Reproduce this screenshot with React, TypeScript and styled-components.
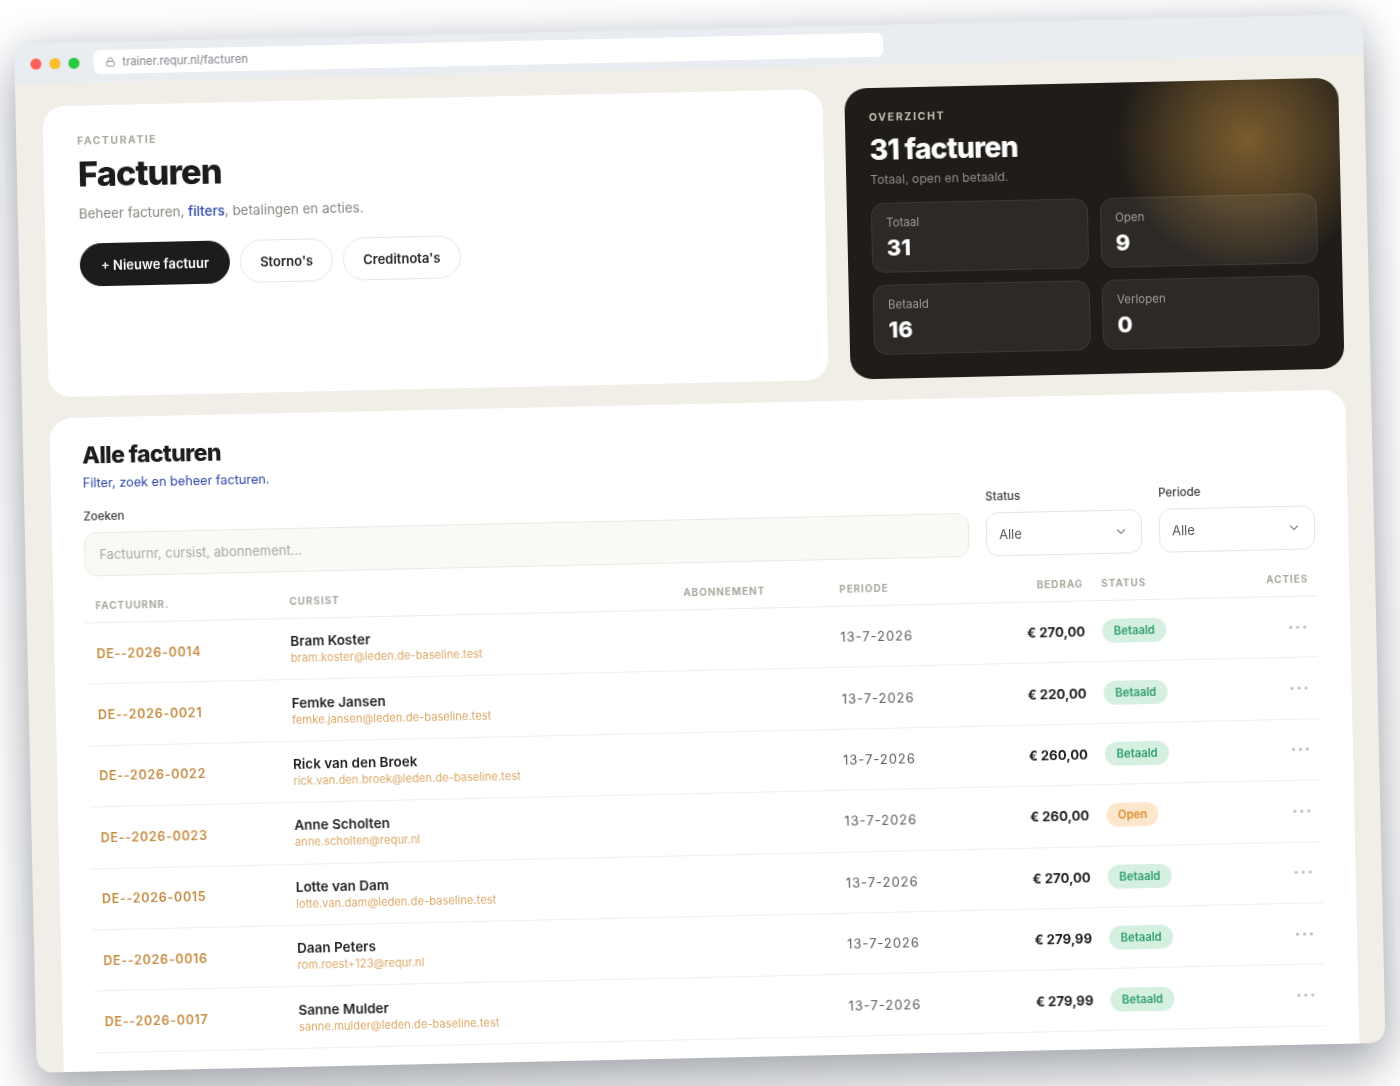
import React from "react";
import styled, {createGlobalStyle} from "styled-components";
import {ChevronDown, Lock} from "lucide-react";

const GlobalStyle = createGlobalStyle`
  html, body {
    margin: 0;
    height: 1086px;
    overflow: hidden;
    background: #ffffff;
    font-family: Inter, "Liberation Sans", sans-serif;
  }
  * {
    box-sizing: border-box;
  }
`;

const Browser = styled.div`
  width: 1349px;
  height: 1029px;
  margin: 44px 0 0 14px;
  display: flex;
  flex-direction: column;
  overflow: hidden;
  background: #f1eee8;
  border-radius: 16px;
  box-shadow: 0 30px 50px rgba(30, 36, 48, 0.3), 0 0 38px rgba(70, 85, 110, 0.24);
  transform-origin: 0 0;
  transform: rotate(-1.27deg);
  filter: blur(0.4px);
`;

const ChromeBar = styled.div`
  height: 40px;
  flex: none;
  display: flex;
  align-items: center;
  padding: 0 16px;
  background: #e9ecf1;
`;

const Light = styled.span<{$color: string}>`
  width: 11px;
  height: 11px;
  margin-right: 8px;
  border-radius: 50%;
  background: ${p => p.$color};
`;

const AddressBar = styled.div`
  width: 790px;
  height: 24px;
  margin-left: 6px;
  padding-left: 12px;
  display: flex;
  align-items: center;
  gap: 7px;
  border-radius: 7px;
  background: #ffffff;
  color: #7f8289;
  font-size: 11.25px;
`;

const Content = styled.div`
  flex: 1;
  min-height: 0;
  display: flex;
  flex-direction: column;
  gap: 21px;
  padding: 23px 26px 0 27px;
`;

const TopRow = styled.div`
  height: 291px;
  flex: none;
  display: grid;
  grid-template-columns: 780px 1fr;
  gap: 22px;
`;

const HeroCard = styled.section`
  padding: 29px 34px;
  background: #ffffff;
  border-radius: 22px;
`;

const Eyebrow = styled.div`
  font-size: 10.5px;
  line-height: 14px;
  font-weight: 700;
  letter-spacing: 0.14em;
  color: #a9a89e;
`;

const PageTitle = styled.h1`
  margin: 5px 0 0;
  font-size: 34.5px;
  line-height: 42px;
  font-weight: 800;
  letter-spacing: -0.03em;
  color: #1c1c1b;
`;

const HeroText = styled.p`
  margin: 8px 0 0;
  font-size: 13.4px;
  line-height: 20px;
  color: #85857f;

  b {
    font-weight: 500;
    color: #2a45a5;
  }
`;

const ButtonRow = styled.div`
  margin-top: 20px;
  display: flex;
  align-items: center;
  gap: 10px;
`;

const PillButton = styled.button<{$dark?: boolean}>`
  height: 43px;
  padding: 0 ${p => (p.$dark ? "20px" : "19px")};
  border-radius: 22px;
  border: 1px solid ${p => (p.$dark ? "#1c1c1b" : "#e8e6e1")};
  background: ${p => (p.$dark ? "#1c1c1b" : "#ffffff")};
  color: ${p => (p.$dark ? "#ffffff" : "#232322")};
  font-family: inherit;
  font-size: 13px;
  font-weight: 600;
`;

const OverviewCard = styled.section`
  padding: 23px 24px 24px;
  display: flex;
  flex-direction: column;
  border-radius: 22px;
  background:
    radial-gradient(
      circle 136px at 402px 60px,
      rgba(190, 140, 62, 0.57),
      rgba(190, 140, 62, 0.3) 50%,
      rgba(190, 140, 62, 0) 96%
    ),
    #201d19;
`;

const OverviewEyebrow = styled(Eyebrow)`
  color: #c4c0b6;
  letter-spacing: 0.16em;
`;

const OverviewTitle = styled.h2`
  margin: 6px 0 0;
  font-size: 28.5px;
  line-height: 38px;
  font-weight: 800;
  letter-spacing: -0.03em;
  color: #ffffff;
`;

const OverviewText = styled.p`
  margin: 2px 0 0;
  font-size: 12.2px;
  line-height: 18px;
  color: #8f8c85;
`;

const StatGrid = styled.div`
  margin-top: 14px;
  display: grid;
  grid-template-columns: 1fr 1fr;
  grid-auto-rows: 70px;
  gap: 12px;
`;

const StatCard = styled.div`
  padding: 12px 14px;
  border-radius: 14px;
  background: rgba(255, 255, 255, 0.055);
  border: 1px solid rgba(255, 255, 255, 0.07);
`;

const StatLabel = styled.div`
  font-size: 11.5px;
  line-height: 15px;
  color: #a09d96;
`;

const StatValue = styled.div`
  margin-top: 3px;
  font-size: 22px;
  line-height: 28px;
  font-weight: 800;
  color: #ffffff;
`;

const TableCard = styled.section`
  flex: 1;
  min-height: 0;
  padding: 23px 33px 0 32px;
  background: #ffffff;
  border-radius: 22px 22px 0 0;
`;

const CardTitle = styled.h2`
  margin: 0;
  font-size: 23.2px;
  line-height: 30px;
  font-weight: 800;
  letter-spacing: -0.03em;
  color: #1c1c1b;
`;

const CardText = styled.p`
  margin: 4px 0 0;
  font-size: 12.7px;
  line-height: 18px;
  color: #2a45a5;
`;

const Filters = styled.div`
  margin-top: 16px;
  display: grid;
  grid-template-columns: 1fr 156px 156px;
  gap: 17px;
`;

const Field = styled.div`
  display: flex;
  flex-direction: column;
  gap: 7.5px;
`;

const FieldLabel = styled.label`
  font-size: 11.5px;
  line-height: 16px;
  font-weight: 500;
  color: #3a3a38;
`;

const SearchInput = styled.input`
  height: 44px;
  padding: 0 14px;
  border: 1px solid #ebe9e2;
  border-radius: 12px;
  background: #faf9f5;
  font-family: inherit;
  font-size: 13px;
  outline: none;

  &::placeholder {
    color: #a8a8a2;
  }
`;

const SelectBox = styled.div`
  height: 44px;
  padding: 0 13px 0 12px;
  display: flex;
  align-items: center;
  justify-content: space-between;
  border: 1px solid #e6e4df;
  border-radius: 12px;
  background: #ffffff;
  font-size: 13px;
  color: #555553;

  svg {
    color: #85857f;
  }
`;

const COLUMNS = "194px 394px 156px 112px 150px 136px 1fr";

const HeadRow = styled.div`
  margin-top: 11.5px;
  height: 36px;
  display: grid;
  grid-template-columns: ${COLUMNS};
  align-items: center;
  border-bottom: 1px solid #ecebe6;
`;

const HeadCell = styled.div<{$right?: boolean}>`
  padding: 0 ${p => (p.$right ? "8px" : "10px")} 0 10px;
  text-align: ${p => (p.$right ? "right" : "left")};
  font-size: 10px;
  font-weight: 700;
  letter-spacing: 0.09em;
  color: #a9a89e;
`;

const Row = styled.div`
  height: 61.4px;
  display: grid;
  grid-template-columns: ${COLUMNS};
  align-items: center;
  border-bottom: 1px solid #f0efeb;
`;

const Cell = styled.div<{$right?: boolean}>`
  padding: 0 ${p => (p.$right ? "7px" : "10px")} 0 10px;
  text-align: ${p => (p.$right ? "right" : "left")};
`;

const InvoiceNo = styled(Cell)`
  font-size: 12.5px;
  font-weight: 600;
  letter-spacing: 0.057em;
  color: #c48a3f;
`;

const Name = styled.div`
  font-size: 13.5px;
  line-height: 18px;
  font-weight: 600;
  color: #1f1f1e;
`;

const Email = styled.div`
  font-size: 11.2px;
  line-height: 16px;
  color: #dba968;
`;

const DateCell = styled(Cell)`
  font-size: 13px;
  letter-spacing: 0.075em;
  color: #5c5c58;
`;

const Amount = styled(Cell)`
  font-size: 13.2px;
  font-weight: 700;
  color: #1f1f1e;
`;

const Badge = styled.span<{$open?: boolean}>`
  display: inline-flex;
  align-items: center;
  height: 24px;
  padding: 0 11.5px;
  border-radius: 12px;
  background: ${p => (p.$open ? "#fde7cc" : "#d5f0e1")};
  color: ${p => (p.$open ? "#d88d2f" : "#2f9e68")};
  font-size: 11.3px;
  font-weight: 600;
`;

const Dots = styled.div`
  padding-right: 11px;
  display: flex;
  justify-content: flex-end;
  gap: 4px;

  span {
    width: 3px;
    height: 3px;
    border-radius: 50%;
    background: #bcbcb8;
  }
`;

interface Invoice {
    number: string,
    name: string,
    email: string,
    amount: string,
    open?: boolean
}

const invoices: Invoice[] = [
    {number: "DE--2026-0014", name: "Bram Koster", email: "bram.koster@leden.de-baseline.test", amount: "€ 270,00"},
    {number: "DE--2026-0021", name: "Femke Jansen", email: "femke.jansen@leden.de-baseline.test", amount: "€ 220,00"},
    {number: "DE--2026-0022", name: "Rick van den Broek", email: "rick.van.den.broek@leden.de-baseline.test", amount: "€ 260,00"},
    {number: "DE--2026-0023", name: "Anne Scholten", email: "anne.scholten@requr.nl", amount: "€ 260,00", open: true},
    {number: "DE--2026-0015", name: "Lotte van Dam", email: "lotte.van.dam@leden.de-baseline.test", amount: "€ 270,00"},
    {number: "DE--2026-0016", name: "Daan Peters", email: "rom.roest+123@requr.nl", amount: "€ 279,99"},
    {number: "DE--2026-0017", name: "Sanne Mulder", email: "sanne.mulder@leden.de-baseline.test", amount: "€ 279,99"}
];

const stats = [
    {label: "Totaal", value: 31},
    {label: "Open", value: 9},
    {label: "Betaald", value: 16},
    {label: "Verlopen", value: 0}
];

const App = () => (
    <>
        <GlobalStyle />
        <Browser>
            <ChromeBar>
                <Light $color="#ff5f57" />
                <Light $color="#febc2e" />
                <Light $color="#28c840" />
                <AddressBar>
                    <Lock size={10} />
                    trainer.requr.nl/facturen
                </AddressBar>
            </ChromeBar>
            <Content>
                <TopRow>
                    <HeroCard>
                        <Eyebrow>FACTURATIE</Eyebrow>
                        <PageTitle>Facturen</PageTitle>
                        <HeroText>Beheer facturen, <b>filters</b>, betalingen en acties.</HeroText>
                        <ButtonRow>
                            <PillButton $dark>+ Nieuwe factuur</PillButton>
                            <PillButton>Storno's</PillButton>
                            <PillButton>Creditnota's</PillButton>
                        </ButtonRow>
                    </HeroCard>
                    <OverviewCard>
                        <OverviewEyebrow>OVERZICHT</OverviewEyebrow>
                        <OverviewTitle>31 facturen</OverviewTitle>
                        <OverviewText>Totaal, open en betaald.</OverviewText>
                        <StatGrid>
                            {stats.map(stat => (
                                <StatCard key={stat.label}>
                                    <StatLabel>{stat.label}</StatLabel>
                                    <StatValue>{stat.value}</StatValue>
                                </StatCard>
                            ))}
                        </StatGrid>
                    </OverviewCard>
                </TopRow>
                <TableCard>
                    <CardTitle>Alle facturen</CardTitle>
                    <CardText>Filter, zoek en beheer facturen.</CardText>
                    <Filters>
                        <Field>
                            <FieldLabel>Zoeken</FieldLabel>
                            <SearchInput readOnly placeholder="Factuurnr, cursist, abonnement..." />
                        </Field>
                        <Field>
                            <FieldLabel>Status</FieldLabel>
                            <SelectBox>Alle<ChevronDown size={14} /></SelectBox>
                        </Field>
                        <Field>
                            <FieldLabel>Periode</FieldLabel>
                            <SelectBox>Alle<ChevronDown size={14} /></SelectBox>
                        </Field>
                    </Filters>
                    <HeadRow>
                        <HeadCell>FACTUURNR.</HeadCell>
                        <HeadCell>CURSIST</HeadCell>
                        <HeadCell>ABONNEMENT</HeadCell>
                        <HeadCell>PERIODE</HeadCell>
                        <HeadCell $right>BEDRAG</HeadCell>
                        <HeadCell>STATUS</HeadCell>
                        <HeadCell $right>ACTIES</HeadCell>
                    </HeadRow>
                    {invoices.map(invoice => (
                        <Row key={invoice.number}>
                            <InvoiceNo>{invoice.number}</InvoiceNo>
                            <Cell>
                                <Name>{invoice.name}</Name>
                                <Email>{invoice.email}</Email>
                            </Cell>
                            <Cell />
                            <DateCell>13-7-2026</DateCell>
                            <Amount $right>{invoice.amount}</Amount>
                            <Cell>
                                <Badge $open={invoice.open}>{invoice.open ? "Open" : "Betaald"}</Badge>
                            </Cell>
                            <Dots><span /><span /><span /></Dots>
                        </Row>
                    ))}
                </TableCard>
            </Content>
        </Browser>
    </>
);

export default App;
